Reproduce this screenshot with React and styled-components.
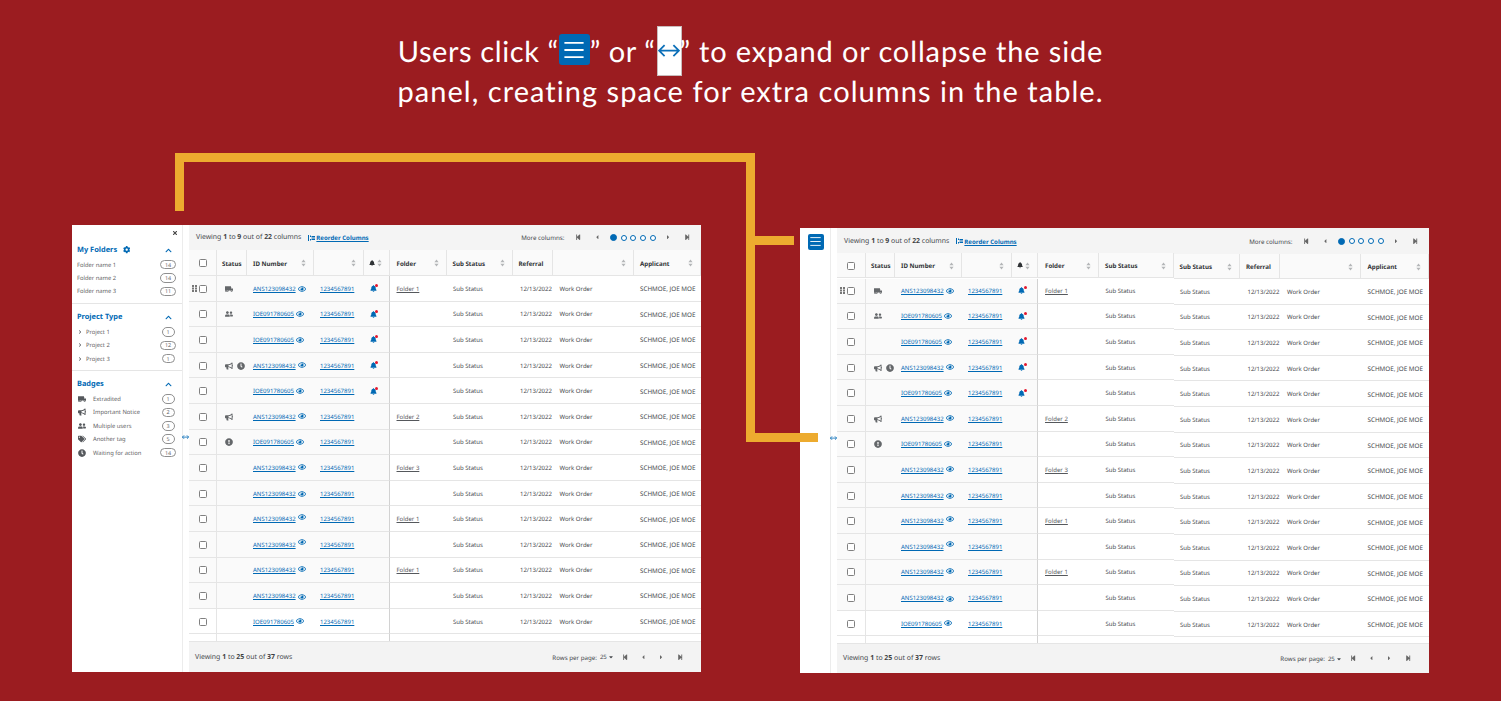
import React from "react";
import styled, { createGlobalStyle } from "styled-components";
import {
  FaBell,
  FaBullhorn,
  FaCaretDown,
  FaCaretLeft,
  FaCaretRight,
  FaChevronRight,
  FaChevronUp,
  FaClock,
  FaCog,
  FaExclamationCircle,
  FaRegEye,
  FaStepBackward,
  FaStepForward,
  FaTags,
  FaTimes,
  FaTruckMoving,
  FaUserFriends,
} from "react-icons/fa";

const BLUE = "#0069b4";
const LINE = "#e5e5e5";
const TEXT = "#46494d";

const GlobalStyle = createGlobalStyle`
  html, body { margin: 0; padding: 0; background: #9b1c20; }
  * { box-sizing: border-box; }
`;

const Page = styled.div`
  position: relative;
  width: 1501px;
  height: 701px;
  overflow: hidden;
  background: #9b1c20;
  font-family: "Noto Sans", "Liberation Sans", sans-serif;
  text-rendering: geometricPrecision;
`;

const Heading = styled.h1`
  margin: 0;
  padding-top: 32px;
  height: 225px;
  font-family: "Lato", "Liberation Sans", sans-serif;
  font-size: 29px;
  font-weight: 400;
  line-height: 40px;
  letter-spacing: 1.05px;
  text-align: center;
  color: #fff;
`;

const HeadingPart = styled.span`
  letter-spacing: ${(p) => p.$spacing}px;
`;

const HeadingMenu = styled.span`
  display: inline-flex;
  align-items: center;
  justify-content: center;
  width: 31px;
  height: 31px;
  margin: -11px 0 -1px;
  border-radius: 3px;
  background: ${BLUE};
  vertical-align: middle;
`;

const HeadingArrow = styled.span`
  display: inline-flex;
  align-items: center;
  justify-content: center;
  width: 25px;
  height: 50px;
  margin: -16px -2px -8px 1px;
  background: #fff;
  border: 1px solid #c9bcbc;
  vertical-align: middle;
`;

const Stage = styled.div`
  display: flex;
  align-items: flex-start;
  gap: 99px;
  padding-left: 72px;
`;

const Panel = styled.section`
  display: flex;
  width: 629px;
  height: ${(p) => p.$height}px;
  margin-top: ${(p) => p.$top}px;
  background: #fff;
`;

const Side = styled.aside`
  flex: none;
  width: ${(p) => p.$width}px;
  background: #fff;
`;

const Gutter = styled.div`
  position: relative;
  flex: none;
  width: 7px;
  background: #fff;
  border-left: 1px solid #ececec;
`;

const GutterArrow = styled.span`
  position: absolute;
  top: ${(p) => p.$top}px;
  left: -1px;
  display: flex;
`;

const CloseRow = styled.div`
  display: flex;
  justify-content: flex-end;
  align-items: center;
  height: 12px;
  padding: 3px 4px 0 0;
  color: #444;
  font-size: 6px;
`;

const SideSection = styled.div`
  padding: 6px 5px 5px;
  border-bottom: ${(p) => (p.$last ? "none" : `1px solid ${LINE}`)};
`;

const SideTitle = styled.div`
  display: flex;
  align-items: center;
  gap: 6px;
  height: 14px;
  color: ${BLUE};
  font-size: 7.4px;
  font-weight: 700;
`;

const SideChevron = styled.span`
  display: flex;
  margin-left: auto;
  padding-right: 5px;
  font-size: 7px;
`;

const SideList = styled.div`
  margin-top: 1px;
`;

const SideRow = styled.div`
  display: flex;
  align-items: center;
  height: 13.4px;
  color: #5f6265;
  font-size: 5.8px;
`;

const RowLead = styled.span`
  display: flex;
  align-items: center;
  flex: none;
  width: ${(p) => p.$width}px;
  padding-left: ${(p) => p.$indent}px;
  color: #55585c;
  font-size: ${(p) => p.$size}px;
`;

const Pill = styled.span`
  display: flex;
  align-items: center;
  justify-content: center;
  width: ${(p) => (p.$wide ? 16 : 13)}px;
  height: 9.5px;
  margin-left: auto;
  margin-right: ${(p) => (p.$wide ? 1 : 2.5)}px;
  border: 0.8px solid #8f8f8f;
  border-radius: 5px;
  font-size: 5.4px;
`;

const MenuButton = styled.button`
  display: flex;
  align-items: center;
  justify-content: center;
  width: 15.5px;
  height: 15.5px;
  margin: 6px 0 0 8px;
  padding: 0;
  border: none;
  border-radius: 2px;
  background: ${BLUE};
`;

const TableArea = styled.div`
  display: flex;
  flex-direction: column;
  flex: 1;
  min-width: 0;
  background: #fff;
`;

const Toolbar = styled.div`
  display: flex;
  align-items: center;
  flex: none;
  height: ${(p) => p.$height}px;
  padding: 0 5px 0 7px;
  background: #f4f4f4;
  color: ${TEXT};
  font-size: 6.9px;
  b {
    color: #3c3f42;
  }
`;

const ReorderLink = styled.a`
  display: flex;
  align-items: center;
  gap: 1px;
  margin-left: 7px;
  color: ${BLUE};
  font-size: 6.1px;
  font-weight: 700;
  text-decoration: underline;
`;

const NavGroup = styled.div`
  display: flex;
  align-items: center;
  margin-left: auto;
`;

const NavLabel = styled.span`
  margin-right: ${(p) => p.$gap ?? 5}px;
  font-size: 6.2px;
`;

const NavIcon = styled.span`
  display: flex;
  align-items: center;
  justify-content: center;
  width: 18.3px;
  color: #666;
  font-size: 6.4px;
`;

const Dot = styled.span`
  width: ${(p) => (p.$on ? 7 : 6)}px;
  height: ${(p) => (p.$on ? 7 : 6)}px;
  margin-left: ${(p) => (p.$on ? 4 : 0)}px;
  margin-right: 3.7px;
  border-radius: 50%;
  background: ${(p) => (p.$on ? BLUE : "#fff")};
  border: 0.8px solid ${BLUE};
`;

const Grid = styled.div`
  display: grid;
  grid-template-columns: ${(p) => p.$cols};
  height: ${(p) => p.$height}px;
`;

const Body = styled.div`
  flex: 1;
  min-height: 0;
  overflow: hidden;
`;

const HeadCell = styled.div`
  display: flex;
  align-items: center;
  min-width: 0;
  padding: 1px 7px 0 ${(p) => p.$pad ?? 6}px;
  background: #fafafa;
  border-right: 1px solid ${LINE};
  border-bottom: 1px solid ${LINE};
  color: #303336;
  font-size: 6.2px;
  font-weight: 700;
  white-space: nowrap;
  transform: translateY(${(p) => p.$shift ?? 0}px);
`;

const SortSlot = styled.span`
  display: flex;
  margin-left: auto;
`;

const Cell = styled.div`
  position: relative;
  display: flex;
  align-items: center;
  min-width: 0;
  padding: 1px 0 0 ${(p) => p.$pad ?? 6}px;
  background: ${(p) => (p.$frozen ? "#fafafa" : "#fff")};
  border-bottom: 1px solid ${LINE};
  border-right: ${(p) => p.$rule ?? "none"};
  color: ${TEXT};
  font-size: ${(p) => p.$size ?? 6}px;
  white-space: nowrap;
  transform: translateY(${(p) => p.$shift ?? 0}px);
`;

const Check = styled.input.attrs({ type: "checkbox" })`
  appearance: none;
  width: 8px;
  height: 8px;
  margin: 0;
  background: #fff;
  border: 0.9px solid #808080;
  border-radius: 1.5px;
`;

const DragHandle = styled.span`
  position: absolute;
  left: 3px;
  top: 50%;
  margin-top: -3px;
  display: flex;
`;

const Link = styled.a`
  color: ${BLUE};
  font-size: 6px;
  text-decoration: underline;
`;

const FolderLink = styled.a`
  color: #55585c;
  font-size: 6px;
  text-decoration: underline;
`;

const EyeIcon = styled.span`
  display: flex;
  margin-left: 2.5px;
  color: ${BLUE};
  font-size: 8px;
  transform: translateY(${(p) => p.$lift ?? 0}px);
`;

const StatusIcons = styled.span`
  display: flex;
  align-items: center;
  gap: 4px;
  color: #64676a;
  font-size: 8px;
`;

const BellWrap = styled.span`
  position: relative;
  display: flex;
  color: ${BLUE};
  font-size: 7px;
`;

const BellDot = styled.span`
  position: absolute;
  top: -1px;
  right: -1.5px;
  width: 3px;
  height: 3px;
  border-radius: 50%;
  background: #e3182d;
`;

const Footer = styled.div`
  display: flex;
  align-items: center;
  flex: none;
  height: ${(p) => p.$height}px;
  padding: 0 12px 0 6px;
  background: #f3f3f3;
  border-top: 1px solid ${LINE};
  color: ${TEXT};
  font-size: 6.9px;
  b {
    color: #3c3f42;
  }
`;

const PerPage = styled.span`
  display: flex;
  align-items: center;
  gap: 1px;
  margin-right: 2px;
  font-size: 6px;
`;

const Connector = styled.svg`
  position: absolute;
  top: 0;
  left: 0;
  pointer-events: none;
`;

function SortIcon() {
  return (
    <svg width="5" height="8" viewBox="0 0 5 8">
      <path d="M2.5 0.5 L4.6 3.2 H0.4 Z M2.5 7.5 L0.4 4.8 H4.6 Z" fill="#b4b6b8" />
    </svg>
  );
}

function ExpandArrows({ size = 8, stroke = 2.4 }) {
  return (
    <svg width={size} height={size * 0.6} viewBox="0 0 20 12" fill="none" stroke="#0b6fb8" strokeWidth={stroke}>
      <path d="M1 6 H19 M6 1 L1 6 L6 11 M14 1 L19 6 L14 11" />
    </svg>
  );
}

function Hamburger({ size, stroke = 1.4 }) {
  return (
    <svg width={size} height={size} viewBox="0 0 20 20" stroke="#fff" strokeWidth={stroke}>
      <path d="M2 4 H18 M2 10 H18 M2 16 H18" />
    </svg>
  );
}

function ReorderIcon() {
  return (
    <svg width="7" height="6" viewBox="0 0 14 12" fill={BLUE}>
      <path d="M0 0 H2 V12 H0 Z M4 1 H6 V4 H4 Z M4 8 H6 V11 H4 Z" />
      <path d="M7 2 H14 V5 H7 Z M7 7 H14 V10 H7 Z" />
    </svg>
  );
}

function DragDots() {
  return (
    <svg width="5" height="7" viewBox="0 0 5 7" fill="#777">
      <path d="M0 0 H2 V2 H0 Z M3 0 H5 V2 H3 Z M0 2.5 H2 V4.5 H0 Z M3 2.5 H5 V4.5 H3 Z M0 5 H2 V7 H0 Z M3 5 H5 V7 H3 Z" />
    </svg>
  );
}

const FOLDERS = [
  ["Folder name 1", 14],
  ["Folder name 2", 14],
  ["Folder name 3", 11],
];
const PROJECTS = [
  ["Project 1", 1],
  ["Project 2", 12],
  ["Project 3", 1],
];
const BADGES = [
  [FaTruckMoving, "Extradited", 1],
  [FaBullhorn, "Important Notice", 2],
  [FaUserFriends, "Multiple users", 3],
  [FaTags, "Another tag", 5],
  [FaClock, "Waiting for action", 14],
];

const ANS = "ANS123098432";
const IOE = "IOE091780605";
const ROWS = [
  { id: ANS, status: [FaTruckMoving], bell: true, folder: "Folder 1", grip: true },
  { id: IOE, status: [FaUserFriends], bell: true },
  { id: IOE, bell: true },
  { id: ANS, status: [FaBullhorn, FaClock], bell: true, lift: -1 },
  { id: IOE, bell: true },
  { id: ANS, status: [FaBullhorn], folder: "Folder 2", lift: -1 },
  { id: IOE, status: [FaExclamationCircle] },
  { id: ANS, folder: "Folder 3", lift: -1 },
  { id: ANS },
  { id: ANS, folder: "Folder 1", lift: -2 },
  { id: ANS, lift: -3 },
  { id: ANS, folder: "Folder 1", lift: -1 },
  { id: ANS, lift: 1 },
  { id: IOE, white: true, lift: -1 },
  { white: true, empty: true },
];

function Sidebar() {
  const pill = (n) => <Pill $wide={n > 9}>{n}</Pill>;
  return (
    <Side $width={110}>
      <CloseRow>
        <FaTimes />
      </CloseRow>
      <SideSection>
        <SideTitle>
          My Folders
          <FaCog />
          <SideChevron>
            <FaChevronUp />
          </SideChevron>
        </SideTitle>
        <SideList>
          {FOLDERS.map(([name, n]) => (
            <SideRow key={name}>
              {name}
              {pill(n)}
            </SideRow>
          ))}
        </SideList>
      </SideSection>
      <SideSection>
        <SideTitle>
          Project Type
          <SideChevron>
            <FaChevronUp />
          </SideChevron>
        </SideTitle>
        <SideList>
          {PROJECTS.map(([name, n]) => (
            <SideRow key={name}>
              <RowLead $width={9} $indent={1} $size={4}>
                <FaChevronRight />
              </RowLead>
              {name}
              {pill(n)}
            </SideRow>
          ))}
        </SideList>
      </SideSection>
      <SideSection $last>
        <SideTitle>
          Badges
          <SideChevron>
            <FaChevronUp />
          </SideChevron>
        </SideTitle>
        <SideList>
          {BADGES.map(([Icon, name, n]) => (
            <SideRow key={name}>
              <RowLead $width={16} $indent={1} $size={8}>
                <Icon />
              </RowLead>
              {name}
              {pill(n)}
            </SideRow>
          ))}
        </SideList>
      </SideSection>
    </Side>
  );
}

function Pager({ label }) {
  return (
    <>
      <NavIcon>
        <FaStepBackward />
      </NavIcon>
      <NavIcon>
        <FaCaretLeft />
      </NavIcon>
      {label}
      <NavIcon>
        <FaCaretRight />
      </NavIcon>
      <NavIcon>
        <FaStepForward />
      </NavIcon>
    </>
  );
}

function DataTable({ cols, toolbarH, headH, footH, extraStatus, frozenShift = 0 }) {
  const statusCols = extraStatus ? ["Sub Status", "Sub Status"] : ["Sub Status"];
  const rule = `1px solid ${LINE}`;
  const thick = "1.5px solid #d2d2d2";
  return (
    <TableArea>
      <Toolbar $height={toolbarH}>
        <span>
          Viewing <b>1</b> to <b>9</b> out of <b>22</b> columns
        </span>
        <ReorderLink>
          <ReorderIcon />
          Reorder Columns
        </ReorderLink>
        <NavGroup>
          <NavLabel>More columns:</NavLabel>
          <Pager
            label={
              <>
                <Dot $on />
                <Dot />
                <Dot />
                <Dot />
                <Dot />
              </>
            }
          />
        </NavGroup>
      </Toolbar>
      <Grid $cols={cols} $height={headH}>
        <HeadCell $pad={10} $shift={frozenShift}>
          <Check />
        </HeadCell>
        <HeadCell $pad={5} $shift={frozenShift}>Status</HeadCell>
        <HeadCell $shift={frozenShift}>
          ID Number
          <SortSlot>
            <SortIcon />
          </SortSlot>
        </HeadCell>
        <HeadCell $shift={frozenShift}>
          <SortSlot>
            <SortIcon />
          </SortSlot>
        </HeadCell>
        <HeadCell $pad={5} $shift={frozenShift}>
          <FaBell />
          <SortSlot>
            <SortIcon />
          </SortSlot>
        </HeadCell>
        <HeadCell $pad={7} $shift={frozenShift}>
          Folder
          <SortSlot>
            <SortIcon />
          </SortSlot>
        </HeadCell>
        {statusCols.map((name, i) => (
          <HeadCell key={i} $shift={extraStatus && i === 0 ? frozenShift : 0}>
            {name}
            <SortSlot>
              <SortIcon />
            </SortSlot>
          </HeadCell>
        ))}
        <HeadCell>Referral</HeadCell>
        <HeadCell>
          <SortSlot>
            <SortIcon />
          </SortSlot>
        </HeadCell>
        <HeadCell $pad={6.5}>
          Applicant
          <SortSlot>
            <SortIcon />
          </SortSlot>
        </HeadCell>
      </Grid>
      <Body>
        {ROWS.map((row, i) => {
          const frozen = !row.white;
          return (
            <Grid key={i} $cols={cols} $height={25.6}>
              <Cell $frozen={frozen} $pad={10} $rule={rule} $shift={frozenShift}>
                {row.grip && (
                  <DragHandle>
                    <DragDots />
                  </DragHandle>
                )}
                {!row.empty && <Check />}
              </Cell>
              <Cell $frozen={frozen} $pad={8} $shift={frozenShift}>
                {row.status && (
                  <StatusIcons>
                    {row.status.map((Icon, k) => (
                      <Icon key={k} />
                    ))}
                  </StatusIcons>
                )}
              </Cell>
              <Cell $frozen={frozen} $shift={frozenShift}>
                {row.id && <Link>{row.id}</Link>}
                {row.id && (
                  <EyeIcon $lift={row.lift}>
                    <FaRegEye />
                  </EyeIcon>
                )}
              </Cell>
              <Cell $frozen={frozen} $shift={frozenShift}>
                {!row.empty && <Link>1234567891</Link>}
              </Cell>
              <Cell $frozen={frozen} $rule={thick} $shift={frozenShift}>
                {row.bell && (
                  <BellWrap>
                    <FaBell />
                    <BellDot />
                  </BellWrap>
                )}
              </Cell>
              <Cell $pad={7} $shift={frozenShift}>
                {row.folder && <FolderLink>{row.folder}</FolderLink>}
              </Cell>
              {statusCols.map((name, k) => (
                <Cell key={k} $pad={6.5} $shift={extraStatus && k === 0 ? frozenShift : 0}>
                  {!row.empty && name}
                </Cell>
              ))}
              <Cell $pad={7.5}>{!row.empty && "12/13/2022"}</Cell>
              <Cell $pad={7}>{!row.empty && "Work Order"}</Cell>
              <Cell $pad={6.5} $size={6.3}>{!row.empty && "SCHMOE, JOE MOE"}</Cell>
            </Grid>
          );
        })}
      </Body>
      <Footer $height={footH}>
        <span>
          Viewing <b>1</b> to <b>25</b> out of <b>37</b> rows
        </span>
        <NavGroup>
          <NavLabel $gap={3}>Rows per page:</NavLabel>
          <PerPage>
            25 <FaCaretDown />
          </PerPage>
          <Pager />
        </NavGroup>
      </Footer>
    </TableArea>
  );
}

export default function App() {
  return (
    <Page>
      <GlobalStyle />
      <Heading>
        <HeadingPart $spacing={0.6}>
          Users click “
          <HeadingMenu>
            <Hamburger size={24} stroke={1.5} />
          </HeadingMenu>
          ” or “
          <HeadingArrow>
            <ExpandArrows size={22} stroke={1.6} />
          </HeadingArrow>
          ”
        </HeadingPart>
        <HeadingPart $spacing={0.87}> to expand or collapse the side</HeadingPart>
        <br />
        panel, creating space for extra columns in the table.
      </Heading>
      <Stage>
        <Panel $height={447} $top={0}>
          <Sidebar />
          <Gutter>
            <GutterArrow $top={210}>
              <ExpandArrows size={7} />
            </GutterArrow>
          </Gutter>
          <DataTable
            cols="28px 30px 67px 49.5px 26px 57px 66px 40px 81px 1fr"
            toolbarH={25}
            headH={26}
            footH={31}
          />
        </Panel>
        <Panel $height={445} $top={3}>
          <Side $width={30}>
            <MenuButton>
              <Hamburger size={13} />
            </MenuButton>
          </Side>
          <Gutter>
            <GutterArrow $top={208}>
              <ExpandArrows size={7} />
            </GutterArrow>
          </Gutter>
          <DataTable
            cols="29px 29px 67px 50px 26px 61px 74.5px 66.5px 40px 81px 1fr"
            toolbarH={26}
            headH={25}
            footH={30}
            extraStatus
            frozenShift={-1}
          />
        </Panel>
      </Stage>
      <Connector width="1501" height="701" fill="none" stroke="#edab2f" strokeWidth="9">
        <path d="M179.5 211 V157.5 H750.5 V437.5 H818" />
        <path d="M750 240.5 H794" />
      </Connector>
    </Page>
  );
}
